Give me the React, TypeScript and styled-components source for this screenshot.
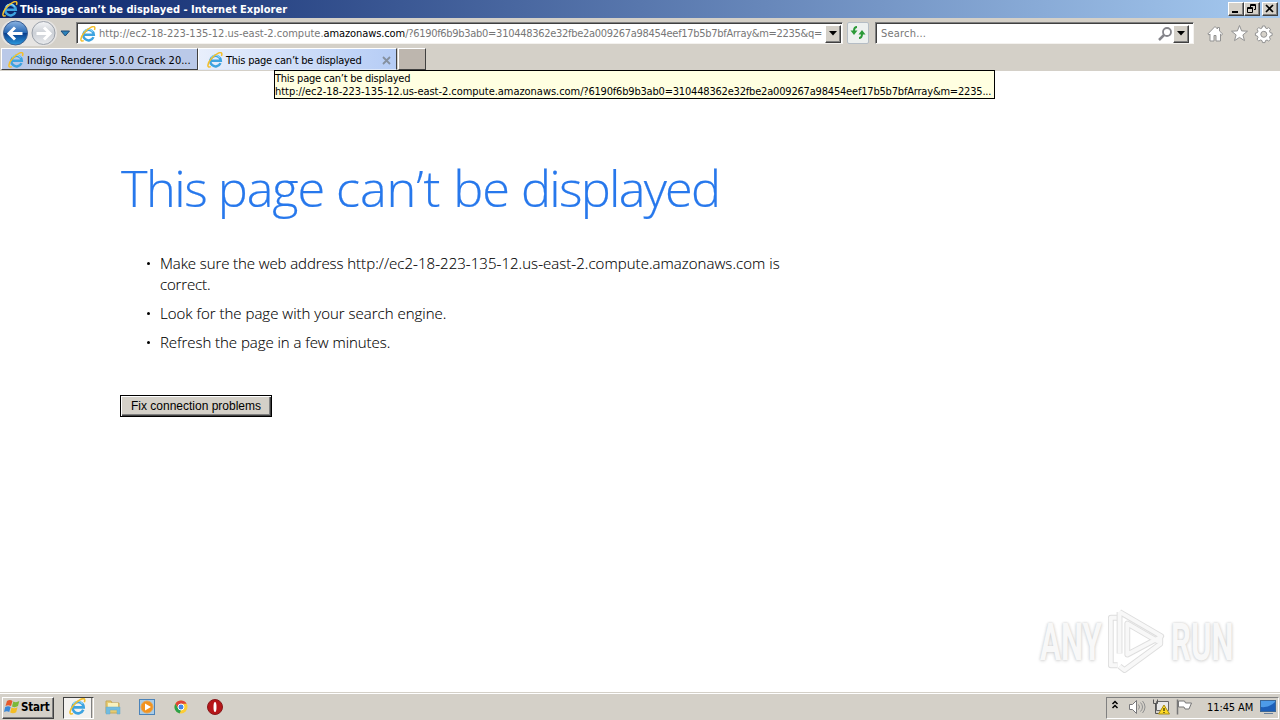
import type { ReactNode } from "react";
import styled, { createGlobalStyle } from "styled-components";

const App = () => {
    return (
        <Screen>
            <GlobalStyle/>
            <TitleBar>
                <IeIcon size={16}/>
                <Title>This page can’t be displayed - Internet Explorer</Title>
                <WindowButton>
                    <svg width="12" height="10"><path d="M2 8h6" stroke="#000" strokeWidth="2"/></svg>
                </WindowButton>
                <WindowButton>
                    <svg width="12" height="10" fill="none" stroke="#000">
                        <path d="M4.5 4V.5h5v5H8M4 1.5h6M1.500 3.500h5v5h-5zM1 4.500h6"/>
                    </svg>
                </WindowButton>
                <WindowButton $gap={2}>
                    <svg width="12" height="10"><path d="M2 1l7 7M9 1L2 8" stroke="#000" strokeWidth="1.700"/></svg>
                </WindowButton>
            </TitleBar>

            <NavBar>
                <NavButtons/>
                <AddressBox>
                    <IeIcon size={16}/>
                    <Url>
                        <Spaced $by={0}>http://ec2-18-223-135-12.us-east-2.compute.</Spaced>
                        <Host>amazonaws.com</Host>
                        <Spaced $by={-0.29}>/?6190f6b9b3ab0=310448362e32fbe2a009267a98454eef17b5b7bfArray&amp;m=2235&amp;q=</Spaced>
                    </Url>
                    <DropButton><Arrow/></DropButton>
                </AddressBox>
                <RefreshButton>
                    <svg width="18" height="18" viewBox="0 0 18 18" fill="none" stroke="#2c9a38" strokeWidth="2">
                        <path d="M8 3Q5 3 5 7v1M10 14q3 0 3-4V8"/>
                        <path d="M1.500 6.500h7L5 11zM9.500 10.500h7L13 6z" fill="#2c9a38" stroke="none"/>
                    </svg>
                </RefreshButton>
                <SearchBox>
                    <Placeholder>Search...</Placeholder>
                    <svg width="15" height="16" fill="none" stroke="#85858b" strokeWidth="1.800">
                        <circle cx="9" cy="6" r="4"/>
                        <path d="M6 9l-5 5" strokeWidth="2.500"/>
                    </svg>
                    <DropButton><Arrow/></DropButton>
                </SearchBox>
                <ToolIcons/>
            </NavBar>

            <TabBar>
                <Tab $width={197}>
                    <IeIcon size={16}/>
                    <TabText $spacing={0}>Indigo Renderer 5.0.0 Crack 20...</TabText>
                </Tab>
                <Tab $width={199} $active>
                    <IeIcon size={16}/>
                    <TabText $spacing={-0.24}>This page can’t be displayed</TabText>
                    <svg width="9" height="9"><path d="M1 1l7 7M8 1L1 8" stroke="#85909f" strokeWidth="1.800"/></svg>
                </Tab>
                <NewTab/>
            </TabBar>

            <Content>
                <Tooltip>
                    <TipLine><Spaced $by={-0.25}>This page can’t be displayed</Spaced></TipLine>
                    <TipLine>
                        <Spaced $by={-0.04}>http://ec2-18-223-135-12.us-east-2.compute.amazonaws.com</Spaced>
                        <Spaced $by={-0.19}>/?6190f6b9b3ab0=310448362e32fbe2a009267a98454eef17b5b7bfArray&amp;m=2235...</Spaced>
                    </TipLine>
                </Tooltip>
                <Heading>
                    <Spaced $by={-1.5}>This </Spaced>
                    <Spaced $by={-1.15}>page </Spaced>
                    <Spaced $by={-0.1}>can’t </Spaced>
                    <Spaced $by={-1.1}>be </Spaced>
                    <Spaced $by={-1.75}>displayed</Spaced>
                </Heading>
                <List>
                    <Item>
                        <Spaced $by={-0.1}>Make sure the web address </Spaced>
                        <Spaced $by={0.04}>http://ec2-18-223-135-12.us-east-2.compute.amazonaws.com is</Spaced>
                        <br/>
                        <Spaced $by={-0.15}>correct.</Spaced>
                    </Item>
                    <Item>Look for the page with your search engine.</Item>
                    <Item><Spaced $by={-0.05}>Refresh the page in a few minutes.</Spaced></Item>
                </List>
                <FixButton>Fix connection problems</FixButton>
                <Watermark>
                    <MarkText $width={65}>ANY</MarkText>
                    <svg width="58" height="64" viewBox="0 0 58 66" fill="none" strokeLinejoin="round">
                        <path d="M8 9H2v49h7M11 3v43M11 3l43 25-4 5-31-18v32l34-18v7L16 63l-5-4" stroke="#dedede" strokeWidth="6"/>
                        <path d="M8 9H2v49h7M11 3v43M11 3l43 25-4 5-31-18v32l34-18v7L16 63l-5-4" stroke="#f8f8f8" strokeWidth="4"/>
                    </svg>
                    <MarkText $width={64}>RUN</MarkText>
                </Watermark>
            </Content>

            <TaskBar>
                <StartButton>
                    <WindowsFlag/>
                    <span>Start</span>
                </StartButton>
                <ActiveTask><TaskFace><IeIcon size={17}/></TaskFace></ActiveTask>
                <TaskIcons>
                    <FolderIcon/>
                    <PlayerIcon/>
                    <ChromeIcon/>
                    <OperaIcon/>
                </TaskIcons>
                <Tray>
                    <TrayIcons/>
                    <Clock>11:45 AM</Clock>
                    <svg width="17" height="16">
                        <rect x=".5" y="1.500" width="15" height="11" fill="#1d5fb8" stroke="#3c6796"/>
                        <path d="M1 8Q9 9 15 3V2H1z" fill="#4d9be8"/>
                        <path d="M4 14.500h9" stroke="#68809c"/>
                    </svg>
                </Tray>
            </TaskBar>
        </Screen>
    );
};

export default App;

const IeIcon = ({size}: { size: number }) => (
    <svg width={size} height={size} viewBox="0 0 17 17" fill="none">
        <path d="M14.300 11.800A5.600 5.600 0 1 1 14.700 9.400H4.500" stroke="#3da3e0" strokeWidth="2.600"/>
        <path d="M13.500 6A5.500 5.500 0 0 0 4 6" stroke="#8bd6f8" strokeWidth="1.200"/>
        <path d="M4 15.500C-.5 17.500.3 12 4.500 7.200 9 2 15-1 15.700 1.600c.2.900 0 1.700-.4 2.600" stroke="#f3bf2c" strokeWidth="1.600"/>
    </svg>
);

const Arrow = () => <svg width="8" height="5"><path d="M0 0h8L4 4.500z" fill="#000"/></svg>;

const NavButtons = () => (
    <svg width="76" height="30" viewBox="0 0 76 30">
        <defs>
            <linearGradient id="back" x2="0" y2="1">
                <stop stopColor="#8cb4e2"/><stop offset=".48" stopColor="#2768b4"/>
                <stop offset=".52" stopColor="#0a3f8e"/><stop offset="1" stopColor="#2b9be0"/>
            </linearGradient>
            <linearGradient id="next" x2="0" y2="1">
                <stop stopColor="#f4f5f7"/><stop offset=".5" stopColor="#ccd0d6"/><stop offset="1" stopColor="#e8eaed"/>
            </linearGradient>
        </defs>
        <rect x="1" y="2" width="56" height="26" rx="13" fill="#e6e4e2"/>
        <circle cx="15.500" cy="15" r="12" fill="url(#back)" stroke="#3b5f92"/>
        <circle cx="43.500" cy="15" r="11.500" fill="url(#next)" stroke="#9ba1aa"/>
        <path d="M22.500 15.500H9.500M15 9.500l-6 6 6 6M36.500 15.500h13M44 9.500l6 6-6 6" fill="none" stroke="#fff" strokeWidth="3"/>
        <path d="M61 13h8.500l-4.250 5z" fill="#2b83bb" stroke="#214b77"/>
    </svg>
);

const ToolIcons = () => (
    <svg width="66" height="22" viewBox="0 -1.500 66 22" fill="#fff" stroke="#929292">
        <path d="M.8 10.500L8 3l2.500 2.500V4h2v3.500l3.200 3-1.200 1-1-.9V17.500H9V12H7v5.500H3v-6.900l-1 .9z"/>
        <path d="M32.500 2l2.100 5.400 5.900.3-4.600 3.700 1.600 5.700-5-3.200-5 3.200 1.600-5.700-4.600-3.700 5.900-.3z"/>
        <path d="M55.500 2.500H58l.5 2 1.500.6 1.700-1 1.800 1.700-1 1.800.6 1.500 2 .5v2.400l-2 .5-.6 1.500 1 1.800-1.800 1.700-1.700-1-1.500.6-.5 2h-2.500l-.5-2-1.500-.6-1.700 1-1.800-1.700 1-1.800-.6-1.500-2-.5V9.600l2-.5.6-1.500-1-1.800 1.800-1.700 1.700 1 1.500-.6z"/>
        <circle cx="56.800" cy="10.800" r="3" fill="#d6d2ca"/>
    </svg>
);

const WindowsFlag = () => (
    <svg width="17" height="16" viewBox="0 0 17 16">
        <path d="M3 2q3-2 5.500 0L7 7Q4 5.500 1.500 7z" fill="#e6592b"/>
        <path d="M9.300 2.500q3 1.500 6-.5L14 7q-3 2-6 .5z" fill="#7bb938"/>
        <path d="M1.200 8q3-1.500 5.500 0l-1.500 5Q3 11.500 0 13z" fill="#3a88d8"/>
        <path d="M7.500 8.500q3 1.500 6-.3l-1.300 5q-3 2-6 .3z" fill="#f4bd24"/>
    </svg>
);

const FolderIcon = () => (
    <svg width="16" height="16" viewBox="0 0 16 16">
        <path d="M1 2h5l1 2h7v10H1z" fill="#e8cc70" stroke="#c5a858"/>
        <path d="M3 4h10v5H3z" fill="#f8f1be"/>
        <path d="M1 8h14v7h-3v-4H5v4H1z" fill="#70bce1" stroke="#69a9c7" strokeWidth=".5"/>
    </svg>
);

const PlayerIcon = () => (
    <svg width="16" height="16" viewBox="0 0 16 16">
        <rect x=".5" y=".5" width="15" height="15" fill="#a9cce7" stroke="#4b83b9"/>
        <circle cx="8" cy="8" r="6" fill="#f2931e" stroke="#e8a34e"/>
        <path d="M6 4.500L12 8l-6 3.500z" fill="#fff"/>
    </svg>
);

const ChromeIcon = () => (
    <svg width="16" height="14" viewBox="-1 0 16 14">
        <circle cx="7" cy="7" r="6.500" fill="#fccd35"/>
        <path d="M1.400 3.700A6.500 6.500 0 0 1 12.600 3.700H7L4.200 8.600z" fill="#df4337"/>
        <path d="M1.400 3.700L4.200 8.600 7 10.200 5.600 13.400A6.500 6.500 0 0 1 1.400 3.700z" fill="#2ca14b"/>
        <circle cx="7" cy="7" r="3" fill="#4286e8" stroke="#fff"/>
    </svg>
);

const OperaIcon = () => (
    <svg width="16" height="16" viewBox="0 0 16 16">
        <circle cx="8" cy="8" r="7.500" fill="#b61619" stroke="#87181a"/>
        <ellipse cx="8" cy="8" rx="1.500" ry="5" fill="#fff"/>
    </svg>
);

const TrayIcons = () => (
    <svg width="96" height="20" viewBox="0 0 96 20" fill="none">
        <path d="M5.500 7l2.500-2.500L10.500 7M5.500 11L8 8.500l2.500 2.500" stroke="#000" strokeWidth="1.500"/>
        <path d="M22.500 7.500h3l4-4v13l-4-4h-3z" fill="#fff" stroke="#77777a"/>
        <path d="M31.500 7.500q2 2.500 0 5M33.500 5.500q4 4.500 0 9M35.500 4q5 6 0 12" stroke="#909090"/>
        <path d="M49.500 4.500h12v9h-12z" fill="#e9e9e9" stroke="#666"/>
        <path d="M46.500 2.500v4h4v-4M48.500 6.500v10h5" stroke="#555"/>
        <path d="M57 8l5.500 9h-11z" fill="#ffda22" stroke="#a78c16"/>
        <path d="M57 11v3M57 15v1" stroke="#000"/>
        <path d="M70.500 2.500v15" stroke="#777" strokeWidth="1.500"/>
        <path d="M71.500 4h6l1 2h6L82 12h-4l-1-2h-5.500z" fill="#fff" stroke="#777"/>
    </svg>
);

const MarkText = ({children, $width}: { children: ReactNode; $width: number }) => (
    <MarkBox $width={$width}><span>{children}</span></MarkBox>
);

const GlobalStyle = createGlobalStyle`
    * {
        box-sizing: border-box;
    }

    body {
        margin: 0;
        overflow: hidden;
        font: 11px "DejaVu Sans Condensed", "DejaVu Sans", sans-serif;
        font-stretch: condensed;
        color: #000;
    }

    svg {
        display: block;
        flex-shrink: 0;
    }
`

const Screen = styled.div`
    display: flex;
    flex-direction: column;
    width: 1280px;
    height: 720px;
    background: #fff;
`

const Spaced = styled.span<{ $by: number }>`
    letter-spacing: ${({$by}) => $by}px;
`

const TitleBar = styled.header`
    display: flex;
    align-items: center;
    height: 18px;
    padding: 0 2px;
    background: linear-gradient(90deg, #0a246a, #a6caf0);
`

const Title = styled.div`
    flex: 1;
    padding-left: 2px;
    color: #fff;
    font-weight: bold;
    letter-spacing: 0.01px;
    white-space: nowrap;
`

const WindowButton = styled.div<{ $gap?: number }>`
    width: 16px;
    height: 14px;
    margin-left: ${({$gap}) => $gap ?? 0}px;
    padding: 1px;
    background: #d4d0c8;
    border: 1px solid;
    border-color: #fff #404040 #404040 #fff;
    box-shadow: inset -1px -1px #808080;
`

const NavBar = styled.div`
    display: flex;
    align-items: center;
    height: 30px;
    background: #d4d0c8;
`

const Field = styled.div`
    display: flex;
    align-items: center;
    height: 22px;
    background: #fff;
    border: 1px solid;
    border-color: #808080 #f4f2ef #f4f2ef #808080;
    box-shadow: inset 1px 1px #404040;
    color: #777;
`

const AddressBox = styled(Field)`
    width: 767px;
    padding: 1px 1px 0 3px;
`

const Url = styled.div`
    display: flex;
    flex: 1;
    min-width: 0;
    padding-left: 3px;
    white-space: nowrap;
`

const Host = styled.span`
    color: #000;
    letter-spacing: -0.1px;
`

const DropButton = styled.div`
    display: flex;
    align-items: center;
    justify-content: center;
    flex-shrink: 0;
    width: 16px;
    height: 18px;
    background: #d4d0c8;
    border: 1px solid;
    border-color: #fff #404040 #404040 #fff;
    box-shadow: inset -1px -1px #808080;
`

const RefreshButton = styled.div`
    display: flex;
    align-items: center;
    justify-content: center;
    width: 22px;
    height: 22px;
    margin: 0 6px 0 4px;
    background: #edf0ef;
    border: 1px solid #b5bdc5;
    border-radius: 2px;
`

const SearchBox = styled(Field)`
    width: 319px;
    margin-right: 13px;
    padding: 1px 4px 0 5px;
`

const Placeholder = styled.div`
    flex: 1;
    letter-spacing: 0.2px;
`

const TabBar = styled.div`
    display: flex;
    height: 23px;
    padding-left: 1px;
    background: #d4d0c8;
`

const Tab = styled.div<{ $width: number; $active?: boolean }>`
    display: flex;
    align-items: center;
    width: ${({$width}) => $width}px;
    height: 22px;
    padding: 2px 5px 0 ${({$active}) => $active ? 8 : 6}px;
    background: ${({$active}) => $active ? "linear-gradient(90deg, #e8effc, #b5ccf5)" : "#bac9e8"};
    border: 1px solid #fff;
    border-right-color: #404040;
    border-bottom-color: ${({$active}) => $active ? "#dce6f8" : "#404040"};
`

const TabText = styled.div<{ $spacing: number }>`
    flex: 1;
    padding-left: 3px;
    white-space: nowrap;
    letter-spacing: ${({$spacing}) => $spacing}px;
`

const NewTab = styled.div`
    width: 28px;
    height: 22px;
    margin-left: 1px;
    background: #bdb6ae;
    border: 1px solid;
    border-color: #fff #404040 #404040 #fff;
`

const Content = styled.main`
    position: relative;
    flex: 1;
    padding: 86px 120px 0;
`

const Tooltip = styled.div`
    position: absolute;
    top: -1px;
    left: 274px;
    width: 721px;
    height: 29px;
    padding-top: 1px;
    background: #ffffe1;
    border: 1px solid #000;
`

const TipLine = styled.div`
    display: flex;
    height: 13px;
    line-height: 14px;
    white-space: nowrap;
`

const Heading = styled.h1`
    height: 62px;
    margin: 0 0 0 1px;
    color: #2778ec;
    font: 300 50.500px/62px "Open Sans", sans-serif;
    white-space: nowrap;
    -webkit-text-stroke: 0.2px #2778ec;
`

const List = styled.ul`
    margin: 34px 0 0;
    padding: 0 0 0 40px;
    font: 300 15px/21px "Open Sans", sans-serif;
    list-style: none;
    -webkit-text-stroke: 0.1px #000;
`

const Item = styled.li`
    position: relative;
    margin-bottom: 8px;
    white-space: nowrap;

    &::before {
        content: "";
        position: absolute;
        top: 9px;
        left: -13px;
        width: 3px;
        height: 3px;
        border-radius: 50%;
        background: #000;
    }
`

const FixButton = styled.button`
    display: block;
    width: 152px;
    height: 22px;
    margin-top: 42px;
    padding: 0;
    background: #d4d0c8;
    border: 1px solid #000;
    box-shadow: inset 1px 1px #fff, inset -1px -1px #404040, inset -2px -2px #808080;
    font: 12px "Liberation Sans", Arial, sans-serif;
    color: #000;
`

const Watermark = styled.div`
    position: absolute;
    right: 46px;
    bottom: 19px;
    display: flex;
    align-items: center;
    gap: 4px;
`

const MarkBox = styled.div<{ $width: number }>`
    width: ${({$width}) => $width}px;

    span {
        display: block;
        width: max-content;
        transform: translate(1px, 2px) scaleX(0.61);
        transform-origin: left;
        color: #f8f8f8;
        font: 700 51px/56px Roboto, sans-serif;
        text-shadow: 0 0 3px #cacaca, 0 1px 5px #ddd;
    }
`

const TaskBar = styled.footer`
    display: flex;
    align-items: center;
    height: 28px;
    padding: 3px 1px 1px 2px;
    background: #d4d0c8;
    border-top: 1px solid #d4d0c8;
    box-shadow: inset 0 1px #fff;
`

const StartButton = styled.div`
    display: flex;
    align-items: center;
    width: 52px;
    height: 22px;
    padding: 0 0 2px 1px;
    font-weight: bold;
    font-size: 11.500px;
    letter-spacing: -0.2px;
    border: 1px solid;
    border-color: #fff #404040 #404040 #fff;
    box-shadow: inset -1px -1px #808080;
`

const ActiveTask = styled.div`
    width: 31px;
    height: 22px;
    margin-left: 9px;
    border: 1px solid;
    border-color: #404040 #fff #fff #404040;
`

const TaskFace = styled.div`
    display: flex;
    align-items: center;
    justify-content: center;
    width: 28px;
    height: 20px;
    padding-bottom: 2px;
    background: #f4f2ef;
    border-right: 1px solid #808080;
`

const TaskIcons = styled.div`
    display: flex;
    align-items: center;
    flex: 1;
    gap: 18px;
    padding: 0 0 2px 11px;
`

const Tray = styled.div`
    display: flex;
    align-items: center;
    width: 173px;
    height: 22px;
    padding-bottom: 1px;
    border: 1px solid;
    border-color: #808080 #fff #fff #808080;
`

const Clock = styled.div`
    width: 57px;
    padding-left: 4px;
    white-space: nowrap;
    letter-spacing: -0.1px;
`
